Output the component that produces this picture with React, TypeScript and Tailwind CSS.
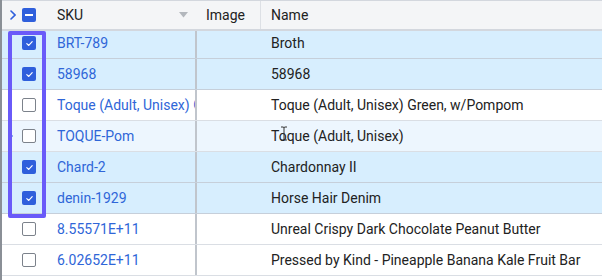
import React from "react";

type Row = { sku: string; name: string; checked: boolean; hover?: boolean };

const rows: Row[] = [
  { sku: "BRT-789", name: "Broth", checked: true },
  { sku: "58968", name: "58968", checked: true },
  { sku: "Toque (Adult, Unisex) Green, w/Pompom", name: "Toque (Adult, Unisex) Green, w/Pompom", checked: false },
  { sku: "TOQUE-Pom", name: "Toque (Adult, Unisex)", checked: false, hover: true },
  { sku: "Chard-2", name: "Chardonnay II", checked: true },
  { sku: "denin-1929", name: "Horse Hair Denim", checked: true },
  { sku: "8.55571E+11", name: "Unreal Crispy Dark Chocolate Peanut Butter", checked: false },
  { sku: "6.02652E+11", name: "Pressed by Kind - Pineapple Banana Kale Fruit Bar", checked: false },
];

function Checkbox({ checked }: { checked: boolean }) {
  if (checked) {
    return (
      <span className="w-[14px] h-[14px] rounded-[2px] bg-[#2f5fdc] flex items-center justify-center">
        <svg width="9" height="9" viewBox="0 0 10 10" fill="none">
          <path d="M2 5.2 L4.2 7.2 L8 3" stroke="white" strokeWidth="1.3" strokeLinecap="round" strokeLinejoin="round" />
        </svg>
      </span>
    );
  }
  return <span className="w-[14px] h-[14px] rounded-[2px] bg-white border border-[#7c828b]" />;
}

export default function App() {
  return (
    <div
      className="relative w-[602px] h-[280px] overflow-hidden bg-white border-l-2 border-[#8a8f96] text-[14px]"
      style={{ fontFamily: "Roboto, 'Liberation Sans', sans-serif" }}
    >
      {/* Header */}
      <div className="relative z-10 h-[31px] flex items-center bg-[#f4f5f7] border-t border-b-2 border-[#d3d7de] text-[#222]">
        <div className="w-[48px] flex items-center shrink-0">
          <svg width="6" height="10" viewBox="0 0 6 10" className="ml-[8px]">
            <path d="M1 1 L5 5 L1 9" stroke="#2f5fdc" strokeWidth="1.6" fill="none" strokeLinecap="round" />
          </svg>
          <span className="ml-[6px] w-[14px] h-[14px] rounded-[2px] bg-[#2f5fdc] flex items-center justify-center">
            <span className="w-[8px] h-[1.5px] bg-white" />
          </span>
        </div>
        <div className="w-[147px] shrink-0 flex items-center pl-[7px] pr-[9px]">
          <span>SKU</span>
          <svg width="9" height="6" viewBox="0 0 9 6" className="ml-auto">
            <path d="M0 0 H9 L4.5 5.5 Z" fill="#b3b7bd" />
          </svg>
        </div>
        <div className="w-[64px] shrink-0 h-full flex items-center pl-[9px] border-r border-[#dde0e5]">Image</div>
        <div className="flex-1 pl-[10px]">Name</div>
      </div>

      {/* Body */}
      <div className="relative h-[249px] overflow-hidden">
        <div className="-mt-[3px]">
          {rows.map((r, i) => (
            <div
              key={i}
              className={`relative h-[31px] flex items-center border-b ${
                r.checked
                  ? "bg-[#d7eefe] border-[#c6cfda]"
                  : r.hover
                  ? "bg-[#edf6fe] border-[#dadee4]"
                  : "bg-white border-[#dadee4]"
              }`}
            >
              {r.hover && (
                <svg width="4" height="8" viewBox="0 0 4 8" className="absolute left-[7px] top-[11px]">
                  <path d="M0 0 L4 4 L0 8 Z" fill="#2f5fdc" />
                </svg>
              )}
              <div className="w-[48px] shrink-0 flex items-center pl-[20px]">
                <Checkbox checked={r.checked} />
              </div>
              <div className="w-[147px] shrink-0 h-full flex items-center pl-[7px] overflow-hidden whitespace-nowrap text-[#2f66d8] border-r-2 border-[#c0c5cc]">
                {r.sku}
              </div>
              <div className="w-[64px] shrink-0" />
              <div className="flex-1 pl-[10px] whitespace-nowrap text-[#222]">{r.name}</div>
            </div>
          ))}
        </div>
      </div>

      {/* Selection highlight */}
      <div className="absolute left-[6px] top-[31px] w-[38px] h-[187px] border-[4px] border-[#6a5af9] rounded-[2px] pointer-events-none" />

      {/* I-beam cursor */}
      <svg width="8" height="15" viewBox="0 0 8 15" className="absolute left-[278px] top-[126px]">
        <path d="M1 1 H3 Q4 1 4 2 V13 Q4 14 3 14 H1 M7 1 H5 Q4 1 4 2 M4 13 Q4 14 5 14 H7" stroke="#333" strokeWidth="1" fill="none" />
      </svg>
    </div>
  );
}
